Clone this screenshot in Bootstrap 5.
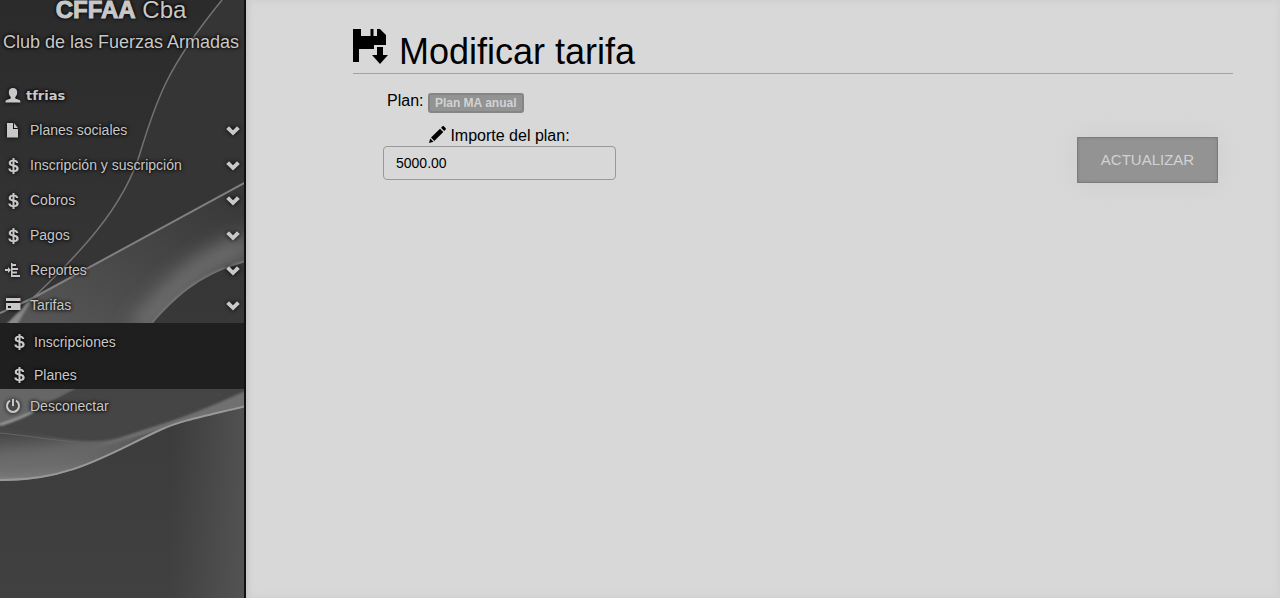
<!DOCTYPE html>
<html lang="es">
<head>
<meta charset="utf-8">
<meta name="viewport" content="width=device-width, initial-scale=1">
<title>Modificar tarifa</title>
<link href="https://cdn.jsdelivr.net/npm/bootstrap@5.3.0/dist/css/bootstrap.min.css" rel="stylesheet">
<style>
  body { font-family: "Liberation Sans", Arial, sans-serif; background: #d8d8d8; color: #000; line-height: 1.5; }
  .sidebar { width: 246px; background: #2c2c2c; border-right: 2px solid #111; text-shadow: 0 0 3px #000, 0 0 4px #000; color: #c8c8c8; box-shadow: 0 0 6px #bbb; }
  .backdrop { position: absolute; inset: 0; width: 100%; height: 100%; }
  .brand { height: 78px; padding-right: 2px; }
  .brand-name { font-size: 24px; line-height: 20px; }
  .brand-name strong { -webkit-text-stroke: 1px #c8c8c8; }
  .brand-sub { font-size: 18px; line-height: 24px; margin-top: 10px; }
  .menu-link { height: 35px; padding: 0 4px 0 5px; gap: 9px; font-size: 14px; color: #c8c8c8; text-decoration: none; }
  .menu-link svg, .page-title svg, .field-label svg { fill: currentColor; flex: none; }
  .menu-link svg { filter: drop-shadow(0 0 2px #000); }
  .user-link { gap: 5px; }
  .user-link strong { font-family: "DejaVu Sans", sans-serif; font-size: 13px; }
  .submenu { background: #1f1f1f; }
  .submenu .menu-link { padding: 5px 11px 0; height: 33px; gap: 7px; }
  .content { padding: 27px 47px 0 107px; box-shadow: inset 0 0 10px #cdcdcd; }
  .page-title { height: 47px; border-bottom: 1px solid #a2a2a2; gap: 10px; font-size: 36px; line-height: 50px; font-weight: 400; margin: 0; }
  .form-area { padding: 0 15px 0 30px; font-size: 16px; }
  .plan-line { padding: 15px 0 0 4px; line-height: 24px; }
  .plan-tag { background: #939393; border: 2px solid #858585; color: #d2d2d2; font-size: 12px; line-height: 14px; padding: 1px 5px; border-radius: 3px; vertical-align: -1px; }
  .amount { width: 233px; }
  .field-label { line-height: 20px; gap: 4px; margin: 13px 0 0; }
  .amount .form-control { height: 34px; font-size: 14px; padding: 6px 12px; background: #d8d8d8; border: 1px solid #999; border-radius: 4px; color: #000; }
  .btn-update { width: 141px; height: 46px; background: #939393; border: 1px solid #7c7c7c; border-radius: 0; color: #d2d2d2; font-size: 15px; padding: 0; box-shadow: 0 0 30px #cdcdcd, inset 0 0 3px #808080; }
</style>
</head>
<body>
<svg class="d-none" aria-hidden="true">
  <symbol id="i-dollar" viewBox="0 0 16 16"><path d="M7.500 0h2v1.800c2.200.2 3.500 1.300 3.800 3.100h-2.200C10.800 4.200 10.400 3.700 9.500 3.500V6.700c2.800.6 4.200 1.700 4.200 3.800S12.200 13.800 9.500 14v2h-2v-2c-2.600-.2-4-1.500-4.200-3.600h2.300c.2 1 .8 1.600 1.900 1.800V8.500C4.900 7.900 3.700 6.900 3.700 5.100c0-1.900 1.400-3.100 3.800-3.300zm0 3.500c-1 .1-1.500.6-1.500 1.400 0 .7.500 1.100 1.500 1.400zm2 8.700c1.200-.1 1.800-.7 1.800-1.600S10.700 9.300 9.500 9z"/></symbol>
  <symbol id="i-down" viewBox="0 0 14 10"><path d="M3 .3 7 4.200 11 .3 13.800 3 7 9.500.2 3z"/></symbol>
</svg>
<div class="d-flex min-vh-100">
  <aside class="sidebar position-relative flex-shrink-0">
    <svg class="backdrop" viewBox="0 0 246 598" preserveAspectRatio="xMinYMin slice" aria-hidden="true">
      <defs>
        <linearGradient id="base" x2="0" y2="1"><stop stop-color="#2b2b2b"/><stop offset=".25" stop-color="#303030"/><stop offset=".6" stop-color="#3a3a3a"/><stop offset="1" stop-color="#414141"/></linearGradient>
        <linearGradient id="edge"><stop offset=".7" stop-color="#606060" stop-opacity="0"/><stop offset="1" stop-color="#606060" stop-opacity=".6"/></linearGradient>
        <linearGradient id="fan" x1="1" y1="0" x2="0" y2="1"><stop stop-color="#363636"/><stop offset="1" stop-color="#585858"/></linearGradient>
        <linearGradient id="wave" x2="0" y2="1"><stop stop-color="#454545"/><stop offset=".5" stop-color="#484848"/><stop offset="1" stop-color="#808080"/></linearGradient>
        <filter id="soft" x="-30%" y="-30%" width="160%" height="160%"><feGaussianBlur stdDeviation="9"/></filter>
        <filter id="fine"><feGaussianBlur stdDeviation="1"/></filter>
        <clipPath id="aboveArc"><path d="M0 0H246V262C205 273 180 292 153 323H0z"/></clipPath>
        <clipPath id="inWave"><path d="M0 389H246V407C205 416 182 420 160 430C110 453 70 482 0 481z"/></clipPath>
      </defs>
      <path fill="url(#base)" d="M0 0H246V598H0z"/>
      <path fill="#353535" d="M222 0C168 66 157 98 141 150C123 213 65 270 33 299L246 182V0z"/>
      <path fill="url(#fan)" d="M246 182 33 298 8 323H153C180 292 205 273 246 262z"/>
      <g clip-path="url(#aboveArc)" fill="none">
        <path d="M250 244C195 262 170 292 138 330" stroke="#6c6c6c" stroke-width="24" filter="url(#soft)"/>
        <path d="M250 261C205 273 180 292 153 324" stroke="#787878" stroke-width="4" filter="url(#fine)"/>
      </g>
      <path fill="#8a8a8a" filter="url(#fine)" d="M33 297 6 325H17z"/>
      <g fill="none" stroke="#737373">
        <path d="M222 0C168 66 157 98 141 150C123 213 68 264 33 298" stroke-width="1.500"/>
        <path d="M246 182 33 298 0 313" stroke="#808080" stroke-width="2"/>
      </g>
      <path fill="url(#edge)" d="M0 400H246V598H0z"/>
      <path fill="url(#wave)" d="M0 389H246V407C205 416 182 420 160 430C110 453 70 482 0 481z"/>
      <g clip-path="url(#inWave)">
        <path fill="#666" d="M0 389H76L32 412 0 425z"/>
        <path fill="none" stroke="#6c6c6c" stroke-width="18" filter="url(#soft)" d="M-10 464C60 460 100 445 150 423"/>
        <path fill="#707070" filter="url(#fine)" d="M250 389C215 405 180 420 140 430L90 449 160 430 250 408z"/>
        <path fill="#444" filter="url(#fine)" d="M76 389H238C200 407 165 424 118 438C80 448 35 430 0 427z"/>
      </g>
      <g fill="none" stroke="#aaa">
        <path d="M0 425C15 420 23 417 34 411" filter="url(#fine)" stroke-width="2"/>
        <path d="M0 433C30 436 50 440 78 442" stroke="#656565"/>
        <path d="M0 480C70 481 110 453 160 430C182 420 205 416 246 406" stroke="#999" stroke-width="2"/>
      </g>
    </svg>
    <div class="position-relative">
      <div class="brand text-center">
        <div class="brand-name"><strong>CFFAA</strong> Cba</div>
        <div class="brand-sub text-nowrap">Club de las Fuerzas Armadas</div>
      </div>
      <nav aria-label="Principal">
        <ul class="list-unstyled m-0">
          <li><a href="#" class="menu-link user-link d-flex align-items-center"><svg width="16" height="16" viewBox="0 0 16 16"><path d="M8 0c2.800 0 4.200 1.700 4.200 4.200 0 2-.7 3.700-1.900 4.800v1.500l4.100 1.600c.8.300 1.100.9 1.100 2.400H.5c0-1.500.3-2.100 1.100-2.400l4.100-1.600V9C4.500 7.900 3.800 6.200 3.800 4.200 3.800 1.700 5.200 0 8 0z"/></svg><strong>tfrias</strong></a></li>
          <li><a href="#" class="menu-link d-flex align-items-center"><svg width="16" height="16" viewBox="0 0 16 16"><path d="M2 0h6v6h5v8.500H2zM9 0l4 5H9z"/></svg><span>Planes sociales</span><svg class="ms-auto" width="14" height="10"><use href="#i-down"/></svg></a></li>
          <li><a href="#" class="menu-link d-flex align-items-center"><svg width="16" height="16"><use href="#i-dollar"/></svg><span>Inscripción y suscripción</span><svg class="ms-auto" width="14" height="10"><use href="#i-down"/></svg></a></li>
          <li><a href="#" class="menu-link d-flex align-items-center"><svg width="16" height="16"><use href="#i-dollar"/></svg><span>Cobros</span><svg class="ms-auto" width="14" height="10"><use href="#i-down"/></svg></a></li>
          <li><a href="#" class="menu-link d-flex align-items-center"><svg width="16" height="16"><use href="#i-dollar"/></svg><span>Pagos</span><svg class="ms-auto" width="14" height="10"><use href="#i-down"/></svg></a></li>
          <li><a href="#" class="menu-link d-flex align-items-center"><svg width="16" height="16" viewBox="0 0 16 16"><path d="M0 6h3V4l3 3-3 3V8H0zM6 0h1.500v14H6zM7 1h4v2H7zM7 5h6v2H7zM7 8.500h5v2H7zM6 12h9v2H6z"/></svg><span>Reportes</span><svg class="ms-auto" width="14" height="10"><use href="#i-down"/></svg></a></li>
          <li><a href="#" class="menu-link d-flex align-items-center" aria-expanded="true"><svg width="16" height="16" viewBox="0 0 16 16"><path d="M1 0h14.500v3H1zM1 5h14.500v7H1zM3 8v2h3V8z" fill-rule="evenodd"/></svg><span>Tarifas</span><svg class="ms-auto" width="14" height="10"><use href="#i-down"/></svg></a>
            <ul class="submenu list-unstyled m-0">
              <li><a href="#" class="menu-link d-flex align-items-center"><svg width="16" height="16"><use href="#i-dollar"/></svg><span>Inscripciones</span></a></li>
              <li><a href="#" class="menu-link d-flex align-items-center"><svg width="16" height="16"><use href="#i-dollar"/></svg><span>Planes</span></a></li>
            </ul>
          </li>
          <li><a href="#" class="menu-link d-flex align-items-center"><svg width="16" height="16" viewBox="0 0 16 16"><path d="M7 0h2v7H7z"/><path fill="none" stroke="currentColor" stroke-width="2" d="M5 1.700a6 6 0 1 0 6 0"/></svg><span>Desconectar</span></a></li>
        </ul>
      </nav>
    </div>
  </aside>
  <main class="content flex-grow-1">
    <h1 class="page-title d-flex"><svg width="36" height="38" viewBox="0 0 36 38" aria-hidden="true"><path d="M0 2h8v7h9.500V2h3v7H24V2h3l6 6v10H21v4H6v13H0zM24 20h6v8h5L27 37 19 28h5z"/></svg><span>Modificar tarifa</span></h1>
    <form class="form-area">
      <div class="plan-line">Plan: <span class="badge plan-tag">Plan MA anual</span></div>
      <div class="d-flex justify-content-between align-items-start">
        <div class="amount">
          <label for="importe" class="field-label d-flex justify-content-center"><svg width="17" height="17" viewBox="0 0 17 17" aria-hidden="true"><path d="M0 17l1.200-4.500 3.300 3.300zM2 11.500 11 2.700l3.300 3.300-9 9zM12 1.800 13.300.5c.6-.6 1.200-.6 1.800 0l1.400 1.400c.6.6.6 1.200 0 1.800L15.200 5z"/></svg>Importe del plan:</label>
          <input id="importe" type="text" class="form-control" value="5000.00">
        </div>
        <button type="button" class="btn btn-update mt-4">ACTUALIZAR</button>
      </div>
    </form>
  </main>
</div>
<script src="https://cdn.jsdelivr.net/npm/bootstrap@5.3.0/dist/js/bootstrap.bundle.min.js"></script>
</body>
</html>
